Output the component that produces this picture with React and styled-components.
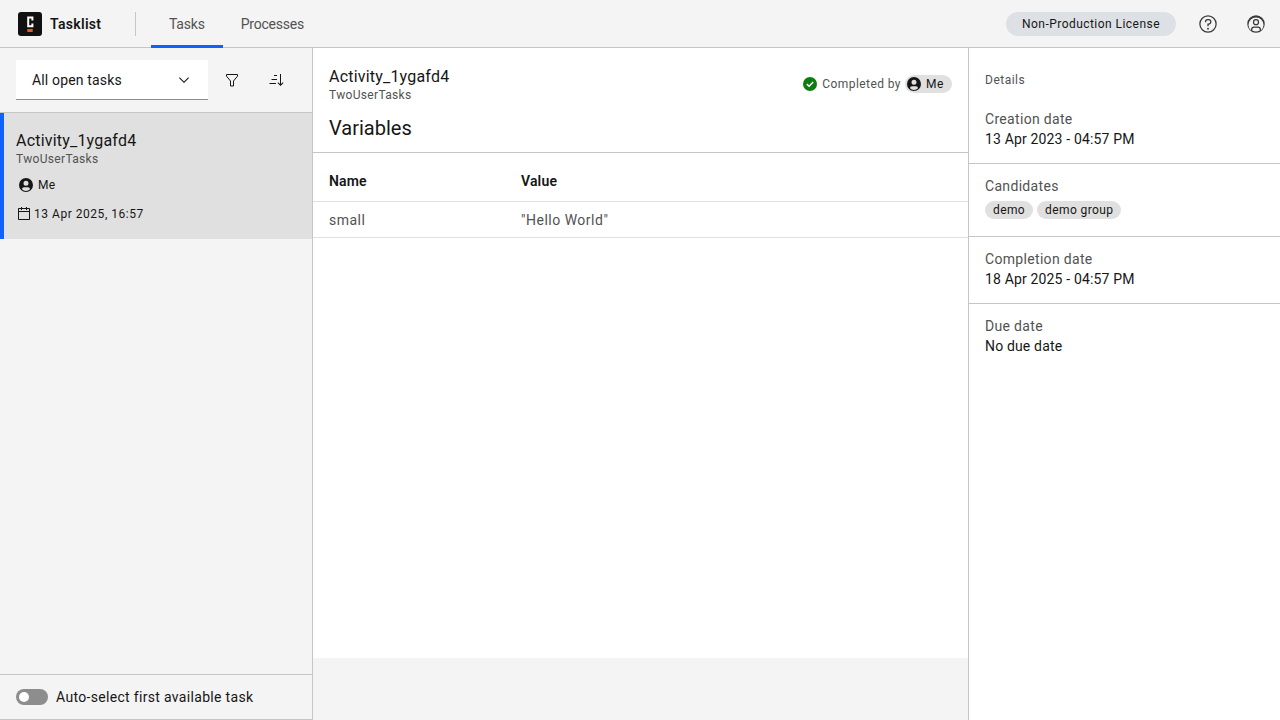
import React from "react"
import styled, {createGlobalStyle} from "styled-components"

const border = "#c6c6c6"

const GlobalStyle = createGlobalStyle`
	html, body {
		margin: 0;
		padding: 0;
		height: 100%;
		background: #ffffff;
	}

	body {
		font-family: "Roboto", "Liberation Sans", sans-serif;
		color: #161616;
		overflow: hidden;
	}

	* {
		box-sizing: border-box;
	}
`

const Logo = () => (
	<LogoBox>
		<svg width="24" height="24" viewBox="0 0 24 24">
			<rect width="24" height="24" rx="3" fill="#111111"/>
			<path d="M14.4 8.4V5.6h-4.2v8.600h4.200v-2.600" fill="none" stroke="#ffffff" strokeWidth="2"/>
			<rect x="9.300" y="17" width="5.400" height="3" fill="#e8591f"/>
		</svg>
	</LogoBox>
)

const UserIcon = () => (
	<svg width="16" height="16" viewBox="0 0 32 32" fill="#161616">
		<path d="M16 2a14 14 0 1 0 0 28 14 14 0 0 0 0-28zm0 5.500a5 5 0 1 1 0 10 5 5 0 0 1 0-10zM24 24.700a11 11 0 0 1-16 0v-.7a4 4 0 0 1 4-3.500h8a4 4 0 0 1 4 3.500z"/>
	</svg>
)

const CalendarIcon = () => (
	<svg width="16" height="16" viewBox="0 0 32 32" fill="#161616">
		<path d="M26 4h-4V2h-2v2h-8V2h-2v2H6c-1.100 0-2 .9-2 2v20c0 1.100.9 2 2 2h20c1.100 0 2-.9 2-2V6c0-1.100-.9-2-2-2zm0 22H6V12h20v14zm0-16H6V6h4v2h2V6h8v2h2V6h4v4z"/>
	</svg>
)

const HelpIcon = () => (
	<svg width="20" height="20" viewBox="0 0 32 32" fill="#393939">
		<path d="M16 2a14 14 0 1 0 0 28 14 14 0 0 0 0-28zm0 26a12 12 0 1 1 0-24 12 12 0 0 1 0 24z"/>
		<circle cx="16" cy="23.500" r="1.500"/>
		<path d="M17 8h-1.500a4.490 4.490 0 0 0-4.500 4.500v.5h2v-.5a2.500 2.500 0 0 1 2.500-2.500H17a2.500 2.500 0 0 1 0 5h-2v4.500h2V17a4.500 4.500 0 0 0 0-9z"/>
	</svg>
)

const ProfileIcon = () => (
	<svg width="20" height="20" viewBox="0 0 32 32" fill="#393939">
		<path d="M16 8a5 5 0 1 0 0 10 5 5 0 0 0 0-10zm0 8a3 3 0 1 1 0-6 3 3 0 0 1 0 6z"/>
		<path d="M16 2a14 14 0 1 0 0 28 14 14 0 0 0 0-28zm-6 24.400V25a3 3 0 0 1 3-3h6a3 3 0 0 1 3 3v1.400a11.900 11.900 0 0 1-12 0zm14-1.400V25a5 5 0 0 0-5-5h-6a5 5 0 0 0-5 5v1.400A12 12 0 1 1 24 26.400z" fillRule="evenodd"/>
	</svg>
)

const ChevronIcon = () => (
	<svg width="16" height="16" viewBox="0 0 32 32" fill="#161616">
		<path d="M16 22 6 12l1.400-1.400 8.600 8.600 8.600-8.600L26 12z"/>
	</svg>
)

const FilterIcon = () => (
	<svg width="16" height="16" viewBox="0 0 16 16">
		<path d="M2.500 2.500h11v1.700L9.500 9v5h-3V9L2.500 4.200z" fill="none" stroke="#161616" strokeWidth="1"/>
	</svg>
)

const SortIcon = () => (
	<svg width="16" height="16" viewBox="0 0 32 32" fill="#161616">
		<path d="M29.600 20.600 26 24.200V4h-2v20.200l-3.600-3.600L19 22l6 6 6-6z"/>
		<path d="M12 6h6v2h-6zM7 14h11v2H7zM3 22h13v2H3z"/>
	</svg>
)

const CheckIcon = () => (
	<svg width="16" height="16" viewBox="0 0 16 16">
		<circle cx="8" cy="8" r="7" fill="#0e7c0e"/>
		<path d="M4.800 8.100l2.300 2.200 4.100-4.300" fill="none" stroke="#ffffff" strokeWidth="1.500"/>
	</svg>
)

const App = () => (
	<>
		<GlobalStyle/>
		<Shell>
			<Header>
				<Brand>
					<Logo/>
					<BrandName>Tasklist</BrandName>
				</Brand>
				<Nav>
					<NavLink $active>Tasks</NavLink>
					<NavLink>Processes</NavLink>
				</Nav>
				<HeaderActions>
					<License>Non-Production License</License>
					<HeaderButton><HelpIcon/></HeaderButton>
					<HeaderButton><ProfileIcon/></HeaderButton>
				</HeaderActions>
			</Header>
			<Main>
				<Sidebar>
					<FilterBar>
						<Dropdown>
							All open tasks
							<ChevronIcon/>
						</Dropdown>
						<IconButton><FilterIcon/></IconButton>
						<IconButton><SortIcon/></IconButton>
					</FilterBar>
					<TaskCard>
						<TaskName>Activity_1ygafd4</TaskName>
						<TaskProcess>TwoUserTasks</TaskProcess>
						<Assignee><UserIcon/>Me</Assignee>
						<TaskDate><CalendarIcon/>13 Apr 2025, 16:57</TaskDate>
					</TaskCard>
					<Spacer/>
					<SidebarFooter>
						<Toggle/>
						Auto-select first available task
					</SidebarFooter>
				</Sidebar>
				<Content>
					<ContentPanel>
						<TaskHeader>
							<div>
								<TaskName>Activity_1ygafd4</TaskName>
								<TaskProcess>TwoUserTasks</TaskProcess>
							</div>
							<Status>
								<CheckIcon/>
								Completed by
								<UserChip><UserIcon/>Me</UserChip>
							</Status>
						</TaskHeader>
						<VariablesTitle>Variables</VariablesTitle>
						<VariablesTable>
							<HeadRow>
								<HeadCell>Name</HeadCell>
								<HeadCell>Value</HeadCell>
							</HeadRow>
							<BodyRow>
								<BodyCell>small</BodyCell>
								<BodyCell>"Hello World"</BodyCell>
							</BodyRow>
						</VariablesTable>
					</ContentPanel>
				</Content>
				<Details>
					<DetailsTitle>Details</DetailsTitle>
					<DetailSection $first>
						<DetailLabel>Creation date</DetailLabel>
						<DetailValue>13 Apr 2023 - 04:57 PM</DetailValue>
					</DetailSection>
					<DetailSection>
						<DetailLabel>Candidates</DetailLabel>
						<Tags>
							<Tag>demo</Tag>
							<Tag>demo group</Tag>
						</Tags>
					</DetailSection>
					<DetailSection>
						<DetailLabel>Completion date</DetailLabel>
						<DetailValue>18 Apr 2025 - 04:57 PM</DetailValue>
					</DetailSection>
					<DetailSection $last>
						<DetailLabel>Due date</DetailLabel>
						<DetailValue>No due date</DetailValue>
					</DetailSection>
				</Details>
			</Main>
		</Shell>
	</>
)
export default App

const Shell = styled.div`
	display: flex;
	flex-direction: column;
	width: 1280px;
	height: 720px;
`
const Header = styled.header`
	display: flex;
	align-items: stretch;
	height: 48px;
	background: #f4f4f4;
	border-bottom: 1px solid ${border};
`
const Brand = styled.div`
	display: flex;
	align-items: center;
	gap: 8px;
	width: 136px;
	padding-left: 18px;
	position: relative;

	&:after {
		content: "";
		position: absolute;
		right: 0;
		top: 12px;
		width: 1px;
		height: 24px;
		background: ${border};
	}
`
const LogoBox = styled.span`
	display: flex;
	width: 24px;
	height: 24px;
`
const BrandName = styled.span`
	font-size: 14px;
	font-weight: 600;
	letter-spacing: 0.3px;
`
const Nav = styled.nav`
	display: flex;
	margin-left: 15px;
`
const NavLink = styled.a`
	display: flex;
	align-items: center;
	padding: 3px 18px 0;
	height: 48px;
	font-size: 14px;
	letter-spacing: -0.22px;
	color: #525252;
	border-bottom: 3px solid ${p => p.$active ? "#0f62fe" : "transparent"};
`
const HeaderActions = styled.div`
	display: flex;
	align-items: center;
	margin-left: auto;
`
const License = styled.span`
	display: flex;
	align-items: center;
	height: 24px;
	padding: 0 16px;
	margin-right: 8px;
	border-radius: 12px;
	background: #dde1e6;
	font-size: 12px;
	letter-spacing: 0.46px;
`
const HeaderButton = styled.span`
	display: flex;
	align-items: center;
	justify-content: center;
	width: 48px;
	height: 47px;
`
const Main = styled.div`
	display: flex;
	height: 672px;
`
const Sidebar = styled.aside`
	display: flex;
	flex-direction: column;
	width: 313px;
	background: #f4f4f4;
	border-right: 1px solid ${border};
	border-bottom: 1px solid ${border};
`
const FilterBar = styled.div`
	display: flex;
	align-items: center;
	height: 65px;
	padding: 12px 0 12px 16px;
	border-bottom: 1px solid ${border};
`
const Dropdown = styled.div`
	display: flex;
	align-items: center;
	justify-content: space-between;
	width: 192px;
	height: 40px;
	padding: 0 16px;
	background: #ffffff;
	border-bottom: 1px solid #8d8d8d;
	font-size: 14px;
	letter-spacing: 0.16px;
`
const IconButton = styled.span`
	display: flex;
	align-items: center;
	justify-content: center;
	width: 44px;
	height: 40px;

	&:first-of-type {
		margin-left: 2px;
	}
`
const TaskCard = styled.div`
	height: 126px;
	padding: 17px 16px 0 12px;
	background: #e0e0e0;
	border-left: 4px solid #0f62fe;
`
const TaskName = styled.div`
	font-size: 16px;
	line-height: 22px;
	letter-spacing: 0.2px;
`
const TaskProcess = styled.div`
	font-size: 12px;
	line-height: 14px;
	letter-spacing: 0.33px;
	color: #525252;
`
const Assignee = styled.div`
	display: flex;
	align-items: center;
	gap: 4px;
	margin: 9px 0 0 2px;
	height: 20px;
	font-size: 12px;
	letter-spacing: 0.32px;
`
const TaskDate = styled.div`
	display: flex;
	align-items: center;
	gap: 2px;
	margin-top: 9px;
	height: 20px;
	font-size: 12px;
	letter-spacing: 0.53px;
`
const Spacer = styled.div`
	flex: 1;
`
const SidebarFooter = styled.div`
	display: flex;
	align-items: center;
	gap: 8px;
	height: 45px;
	padding-left: 16px;
	border-top: 1px solid ${border};
	font-size: 14px;
	letter-spacing: 0.32px;
`
const Toggle = styled.span`
	position: relative;
	width: 32px;
	height: 16px;
	border-radius: 8px;
	background: #8d8d8d;

	&:after {
		content: "";
		position: absolute;
		left: 3px;
		top: 3px;
		width: 10px;
		height: 10px;
		border-radius: 50%;
		background: #ffffff;
	}
`
const Content = styled.main`
	width: 655px;
	background: #f4f4f4;
`
const ContentPanel = styled.div`
	height: 610px;
	background: #ffffff;
`
const TaskHeader = styled.div`
	display: flex;
	align-items: center;
	justify-content: space-between;
	height: 66px;
	padding: 6px 16px 0;
`
const Status = styled.div`
	display: flex;
	align-items: center;
	gap: 4px;
	font-size: 12px;
	letter-spacing: 0.42px;
	color: #525252;
	padding-left: 1px;
`
const UserChip = styled.span`
	display: flex;
	align-items: center;
	gap: 4px;
	height: 18px;
	padding: 0 8px 0 1px;
	border-radius: 9px;
	background: #e0e0e0;
	color: #161616;
	font-size: 12px;
	letter-spacing: 0.6px;
`
const VariablesTitle = styled.h2`
	margin: 0;
	height: 39px;
	padding: 1px 16px 0;
	font-size: 20px;
	line-height: 26px;
	font-weight: 400;
	border-bottom: 1px solid ${border};
`
const VariablesTable = styled.div`
	padding-top: 8px;
`
const HeadRow = styled.div`
	display: grid;
	grid-template-columns: 192px 1fr;
	height: 41px;
	padding: 0 16px;
	align-items: center;
	border-bottom: 1px solid #e0e0e0;
`
const BodyRow = styled(HeadRow)`
	height: 36px;
`
const HeadCell = styled.span`
	font-size: 14px;
	font-weight: 600;
	letter-spacing: 0.16px;
`
const BodyCell = styled.span`
	font-size: 14px;
	letter-spacing: 0.5px;
	color: #525252;
`
const Details = styled.aside`
	width: 312px;
	background: #ffffff;
	border-left: 1px solid ${border};
`
const DetailsTitle = styled.div`
	padding: 24px 16px 0;
	height: 61px;
	font-size: 12px;
	line-height: 16px;
	letter-spacing: 0.5px;
	color: #525252;
`
const DetailSection = styled.section`
	padding: ${p => p.$first ? "0" : "12px"} 16px 14px;
	border-bottom: ${p => p.$last ? "none" : `1px solid ${border}`};
`
const DetailLabel = styled.div`
	font-size: 14px;
	line-height: 20px;
	letter-spacing: 0.32px;
	color: #525252;
`
const DetailValue = styled.div`
	font-size: 14px;
	line-height: 20px;
	letter-spacing: 0.16px;
`
const Tags = styled.div`
	display: flex;
	gap: 4px;
	margin-top: 5px;
	padding-bottom: 3px;
`
const Tag = styled.span`
	display: flex;
	align-items: center;
	height: 18px;
	padding: 0 8px;
	border-radius: 9px;
	background: #e0e0e0;
	font-size: 12px;
	letter-spacing: 0.4px;
`
